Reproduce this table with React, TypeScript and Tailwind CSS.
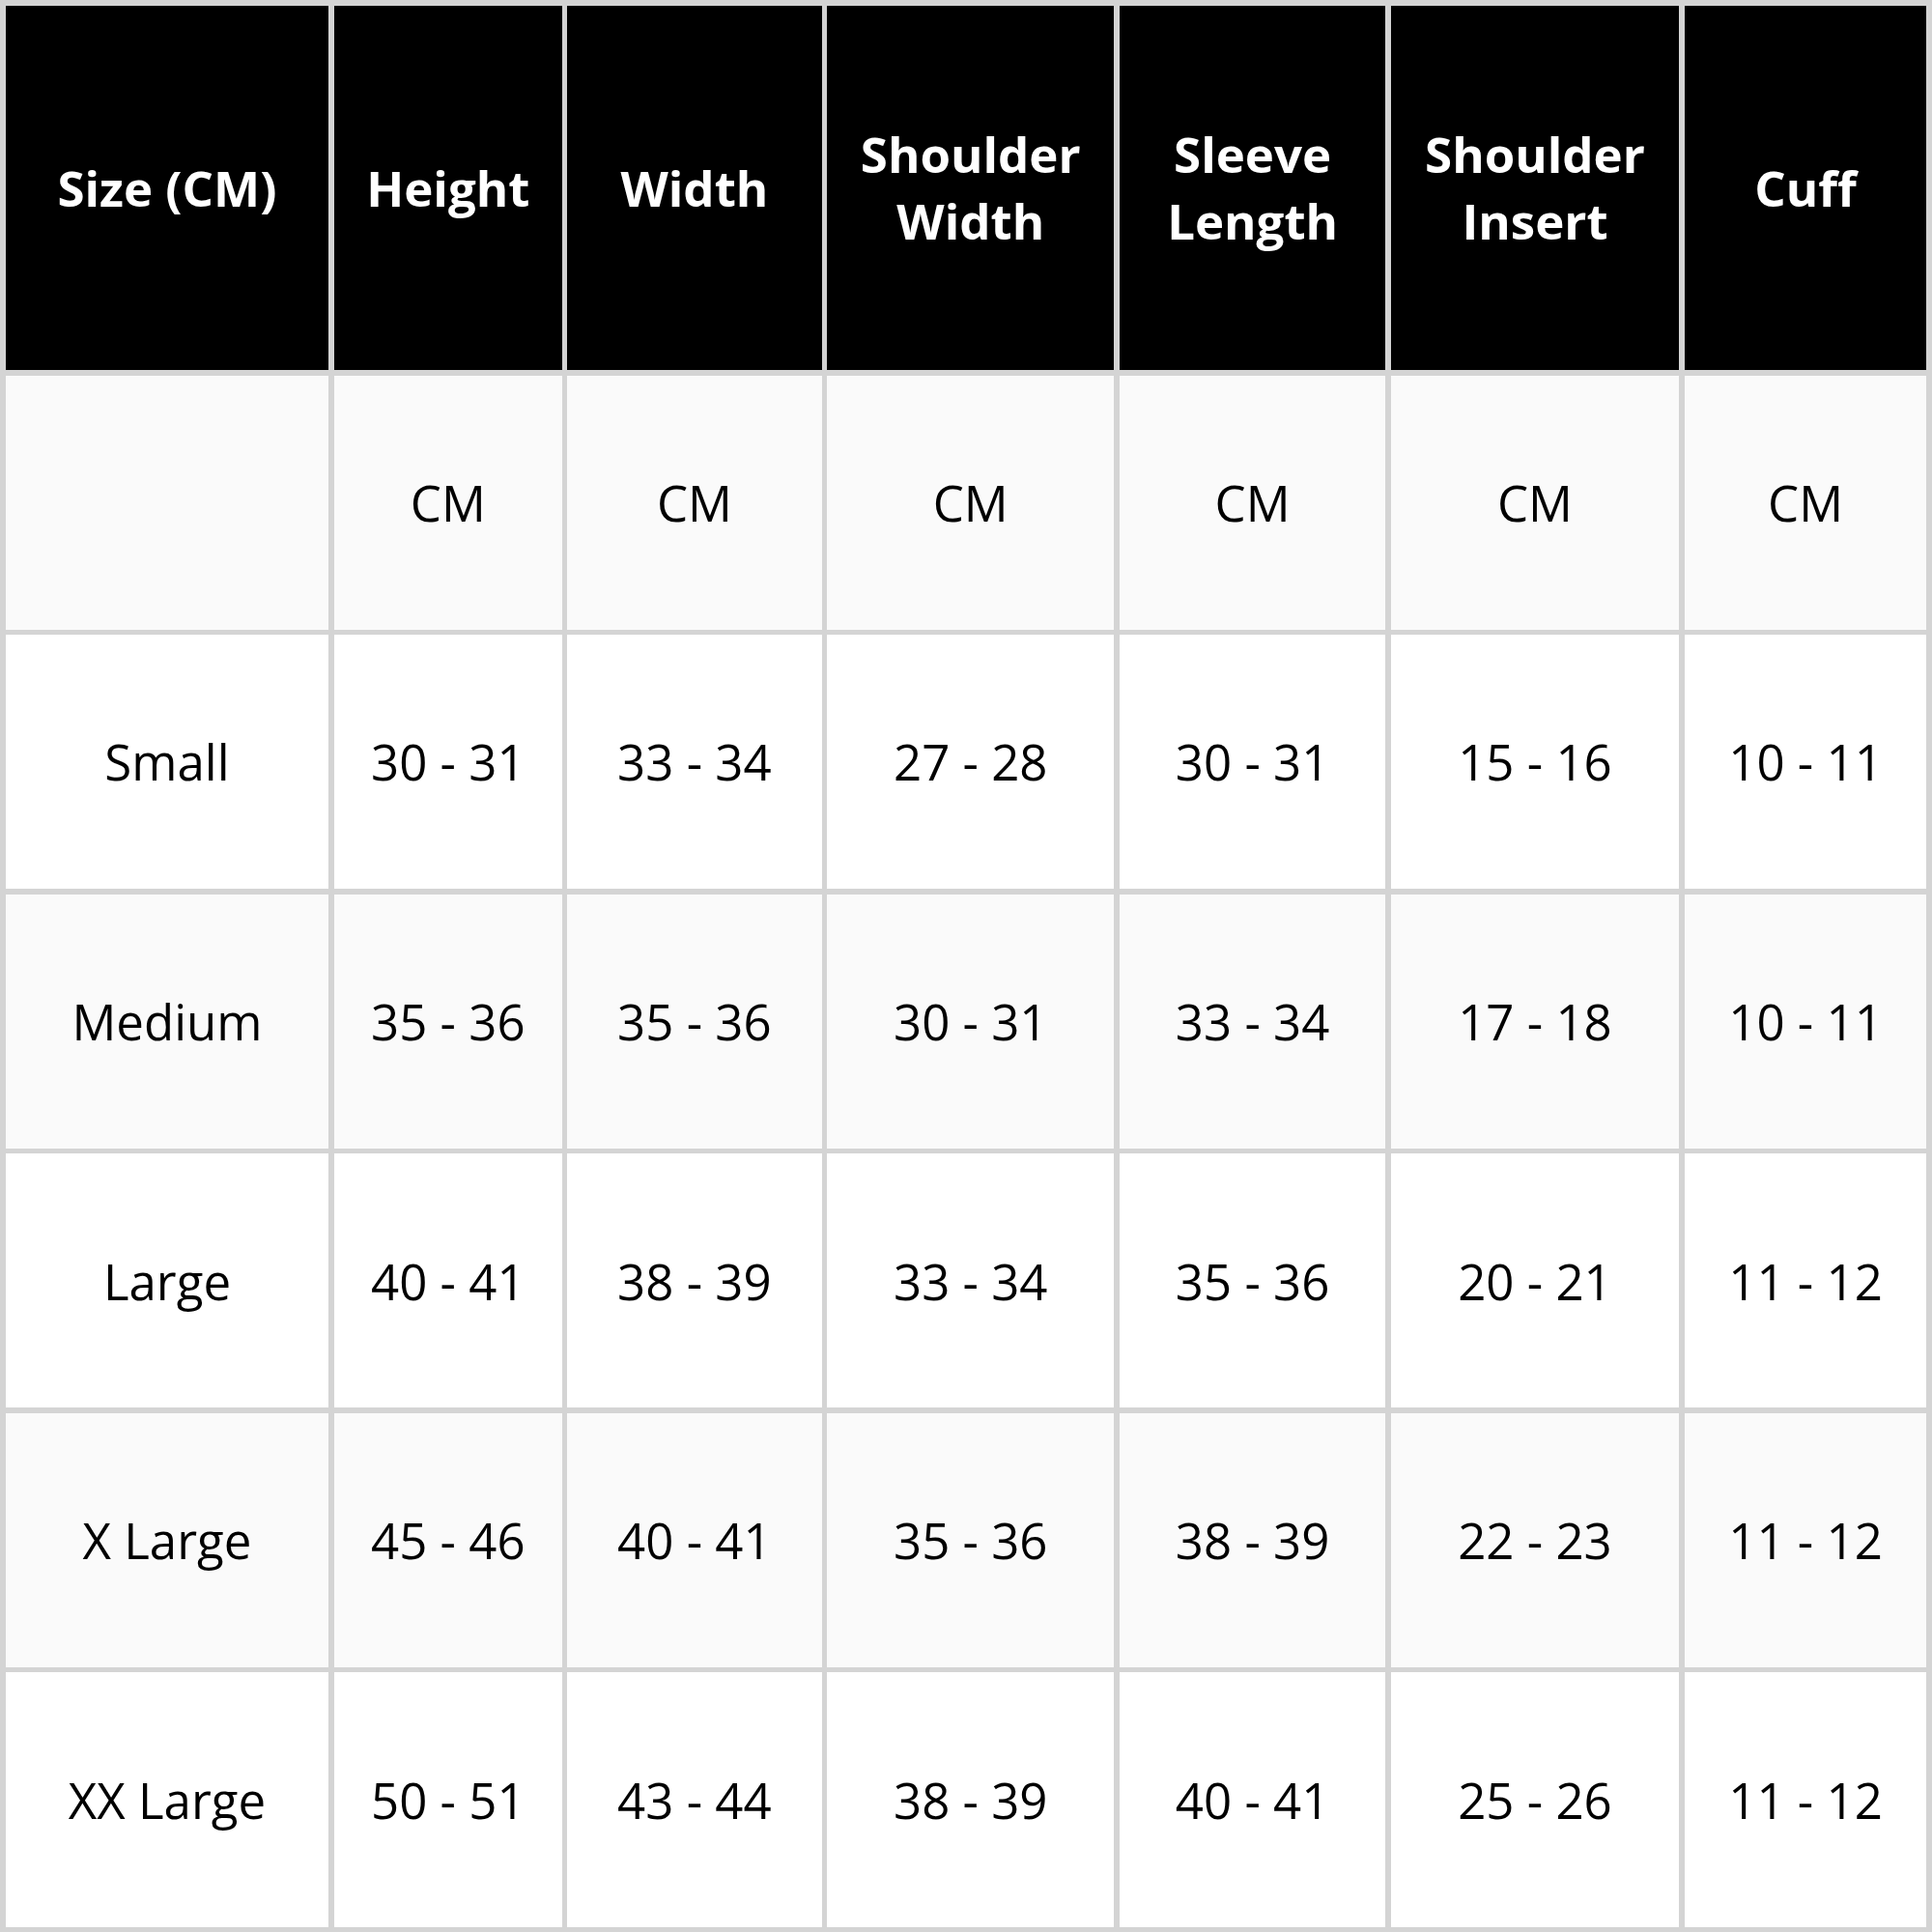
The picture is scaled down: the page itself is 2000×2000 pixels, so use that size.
import React from 'react';

const headers = ['Size (CM)', 'Height', 'Width', 'Shoulder Width', 'Sleeve Length', 'Shoulder Insert', 'Cuff'];

const rows: string[][] = [
  ['', 'CM', 'CM', 'CM', 'CM', 'CM', 'CM'],
  ['Small', '30 - 31', '33 - 34', '27 - 28', '30 - 31', '15 - 16', '10 - 11'],
  ['Medium', '35 - 36', '35 - 36', '30 - 31', '33 - 34', '17 - 18', '10 - 11'],
  ['Large', '40 - 41', '38 - 39', '33 - 34', '35 - 36', '20 - 21', '11 - 12'],
  ['X Large', '45 - 46', '40 - 41', '35 - 36', '38 - 39', '22 - 23', '11 - 12'],
  ['XX Large', '50 - 51', '43 - 44', '38 - 39', '40 - 41', '25 - 26', '11 - 12'],
];

export default function App() {
  return (
    <div
      className="w-[2000px] h-[2000px] bg-[#d4d4d4] p-[5.5px] grid gap-[5.5px] grid-cols-[334.5fr_235.5fr_263fr_297fr_275fr_298fr_250.5fr] grid-rows-[377.5fr_263fr_263fr_263fr_263fr_263fr_263fr]"
      style={{ fontFamily: '"Open Sans", sans-serif' }}
    >
      {headers.map((h) => (
        <div
          key={h}
          className="bg-black text-white font-bold text-[51px] leading-[69px] flex items-center justify-center text-center px-6"
        >
          {h}
        </div>
      ))}
      {rows.map((r, i) =>
        r.map((c, j) => (
          <div
            key={`${i}-${j}`}
            className={
              i % 2 === 0
                ? 'bg-[#fafafa] text-black text-[51px] flex items-center justify-center'
                : 'bg-white text-black text-[51px] flex items-center justify-center'
            }
          >
            {c}
          </div>
        )),
      )}
    </div>
  );
}
